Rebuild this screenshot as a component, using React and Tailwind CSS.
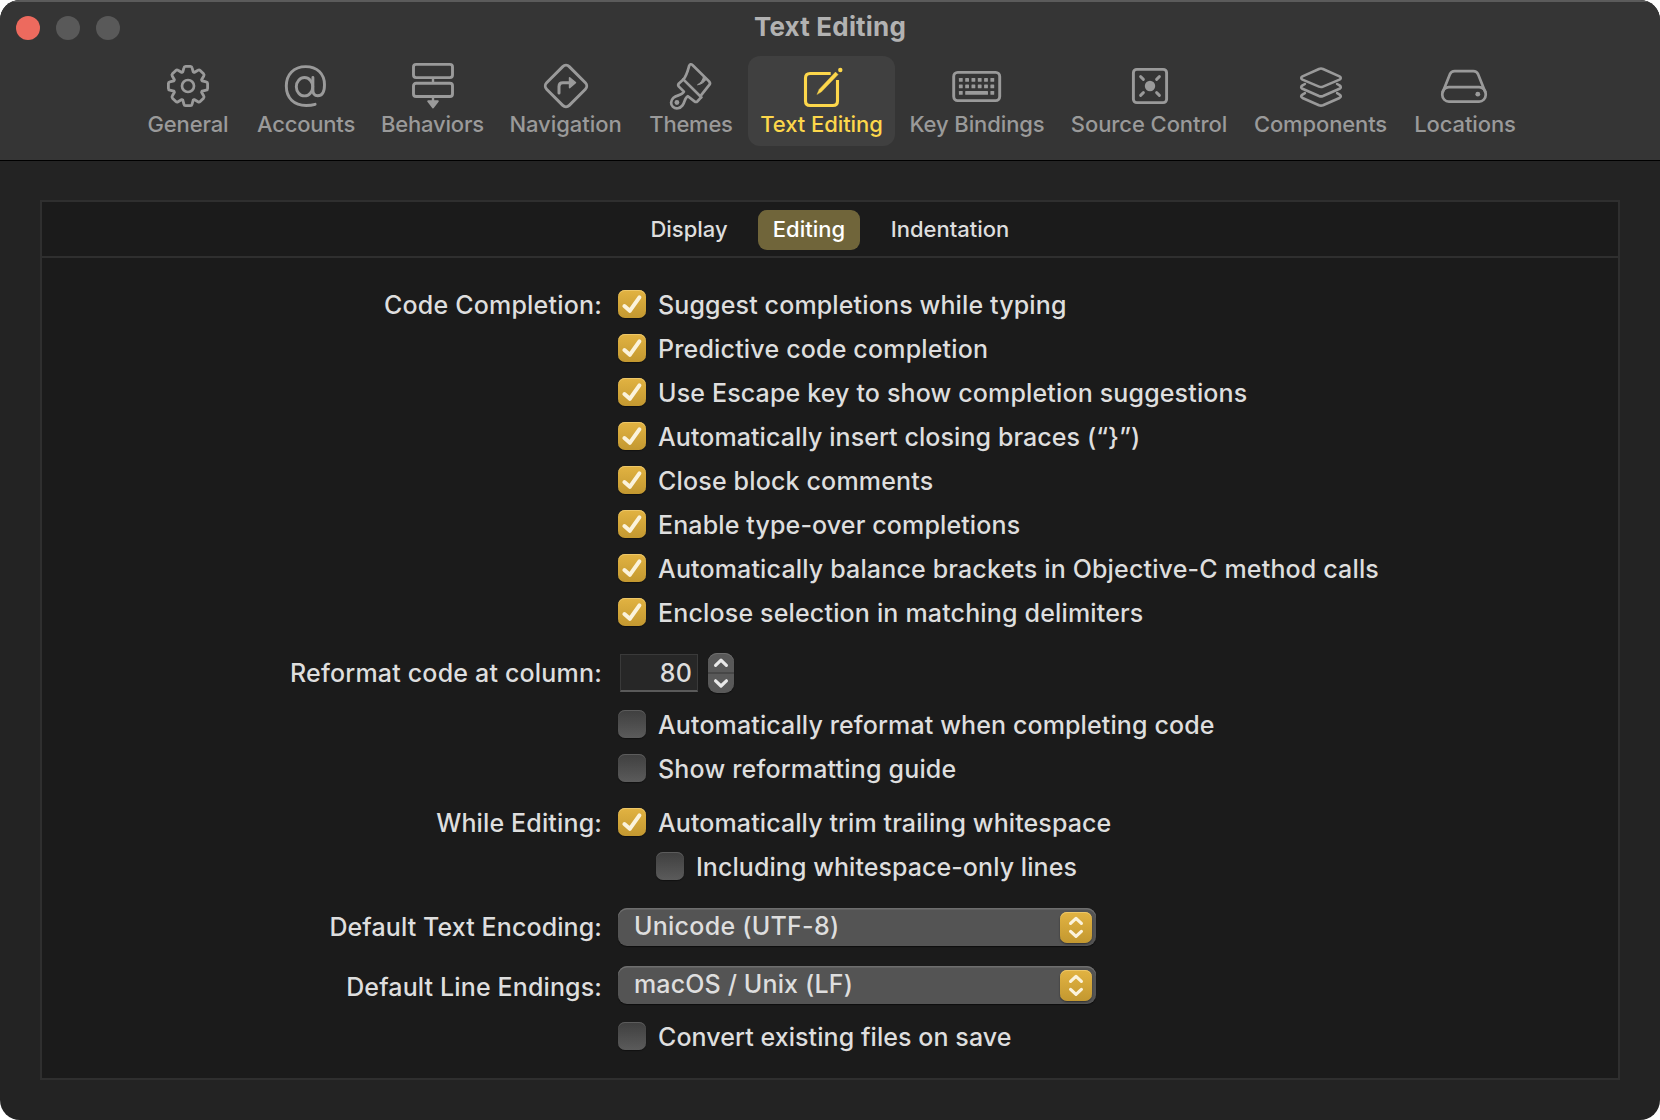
const teeth = Array.from({ length: 8 }, (_, i) => {
  const a = (i * Math.PI) / 4;
  const at = (x, y) =>
    `${(x * Math.cos(a) - y * Math.sin(a)).toFixed(2)} ${(x * Math.sin(a) + y * Math.cos(a)).toFixed(2)}`;
  return `${i ? "L" : "M"}${at(-5.2, -14)} L${at(-4.1, -18.2)} Q${at(-3.8, -19.6)} ${at(-2.4, -19.6)} L${at(2.4, -19.6)} Q${at(3.8, -19.6)} ${at(4.1, -18.2)} L${at(5.2, -14)}`;
}).join(" ");

function Icon({ children }) {
  return (
    <svg
      className="block h-[52px] w-[60px] shrink-0"
      viewBox="-30 -26 60 52"
      fill="none"
      stroke="currentColor"
      strokeWidth="2.9"
      strokeLinecap="round"
      strokeLinejoin="round"
    >
      {children}
    </svg>
  );
}

const GeneralIcon = () => (
  <Icon>
    <path d={teeth + " Z"} strokeWidth="2.8" />
    <circle r="6" strokeWidth="2.7" />
  </Icon>
);

const AccountsIcon = () => (
  <Icon>
    <g transform="translate(-0.5 0)">
      <ellipse cx="-1" cy="0.7" rx="8.2" ry="9.2" />
      <path d="M7.4 -8.5 V4 C7.4 8 9.4 9.8 12.2 9.8 C16.6 9.8 19 5.5 19 -1.2 C19 -12.2 11.5 -19.4 0.2 -19.4 C-11.7 -19.4 -19.2 -11.5 -19.2 0.1 C-19.2 12 -11.6 19.5 0.6 19.5 C4.2 19.5 7 19.1 9.6 18.3" />
    </g>
  </Icon>
);

const BehaviorsIcon = () => (
  <Icon>
    <rect x="-19.5" y="-21.6" width="39" height="13.2" rx="2.6" />
    <rect x="-19.5" y="-2.7" width="39" height="13.2" rx="2.6" />
    <path d="M0 -8 V-3 M0 11 V15" strokeWidth="2.4" strokeLinecap="butt" />
    <path d="M-4.8 15.2 H4.8 L0 21.4 Z" fill="currentColor" strokeWidth="2" />
  </Icon>
);

const NavigationIcon = () => (
  <Icon>
    <rect x="-16" y="-16" width="32" height="32" rx="4.6" transform="rotate(45)" />
    <path d="M-7 7 V0.6 Q-7 -3.3 -3.1 -3.3 H3.6" strokeWidth="3" />
    <path d="M3.6 -8.2 L9.4 -3.3 L3.6 1.6 Z" fill="currentColor" strokeWidth="1.6" />
  </Icon>
);

const ThemesIcon = () => (
  <Icon>
    <g transform="translate(-0.5 0)">
      <path d="M-7 -6.7 C-3.5 -11 -2.6 -16 -1.4 -20 Q-0.2 -23 2.2 -20.8 L18.6 -4.6 Q20.4 -2.6 18.6 -0.8 L10.7 9.2" strokeWidth="2.7" />
      <path d="M-7.2 -6.6 L10.8 11.2" strokeWidth="2.7" />
      <path
        d="M-7.2 -6.6 L-11.6 -2.6 Q-13 -1 -11.6 0.6 L-6.6 5.6 C-8.6 9.6 -13.6 8.8 -17 11.8 C-20.2 14.8 -20 18.6 -17.6 20.8 C-14.6 23.4 -10.4 22.6 -8 19.4 C-5.4 16 -6 11.6 -2.6 10.2 L4 15.4 Q5.6 16.6 7 15.2 L10.6 11.4"
        strokeWidth="2.7"
      />
      <path d="M13 -9.5 L15.5 -6.5 C13.5 -3.5 10.5 -1.6 7 -1.2 C10.4 -3 12.4 -6 13 -9.5 Z" fill="currentColor" strokeWidth="1" />
      <circle cx="-13.6" cy="16.5" r="2.4" fill="currentColor" stroke="none" />
    </g>
  </Icon>
);

const TextEditingIcon = () => (
  <Icon>
    <g transform="translate(-0.5 0)">
      <path
        d="M9.2 -12.5 H-11.4 Q-16 -12.5 -16 -7.9 V14.9 Q-16 19.5 -11.4 19.5 H11.4 Q16 19.5 16 14.9 V-6"
        strokeWidth="3.1"
        strokeLinecap="butt"
      />
      <path d="M-4.4 8.2 L-2.2 3.2 L14 -14 L16.6 -11.4 L0 5.8 Z" fill="currentColor" strokeWidth="0.4" />
      <circle cx="18.8" cy="-16" r="2.2" fill="currentColor" stroke="none" />
    </g>
  </Icon>
);

const KeyBindingsIcon = () => (
  <Icon>
    <g transform="translate(-0.5 0)">
      <rect x="-22.8" y="-13.6" width="46" height="28.2" rx="4" />
      {[-8, -1.5].map((y) =>
        [-17.6, -11.3, -5, 1.3, 7.6, 13.9].map((x) => (
          <rect key={`${x}${y}`} x={x} y={y} width="3.8" height="3.8" rx="0.6" fill="currentColor" stroke="none" />
        )),
      )}
      <rect x="-17.6" y="5" width="3.8" height="3.8" rx="0.6" fill="currentColor" stroke="none" />
      <rect x="-11.3" y="5" width="22.8" height="3.8" rx="0.6" fill="currentColor" stroke="none" />
      <rect x="13.9" y="5" width="3.8" height="3.8" rx="0.6" fill="currentColor" stroke="none" />
    </g>
  </Icon>
);

const SourceControlIcon = () => (
  <Icon>
    <rect x="-15.6" y="-16.6" width="33.2" height="33.2" rx="3.4" />
    <circle cx="1" cy="0" r="5.2" fill="currentColor" stroke="none" />
    <path d="M-8.4 -9.4 L-5.6 -6.6 M10.4 -9.4 L7.6 -6.6 M-8.4 9.4 L-5.6 6.6 M10.4 9.4 L7.6 6.6" />
  </Icon>
);

const ComponentsIcon = () => (
  <Icon>
    <g strokeWidth="2.6" transform="translate(-0.5 0)">
      <path d="M-1.5 -17 Q0.5 -17.9 2.5 -17 L19 -9.6 Q21.6 -8 19 -6.4 L2.5 0.6 Q0.5 1.4 -1.5 0.6 L-18 -6.4 Q-20.6 -8 -18 -9.6 Z" />
      <path d="M-15.6 -2 L-18 -0.6 Q-20.6 1.2 -18 2.8 L-1.5 10 Q0.5 10.8 2.5 10 L19 2.8 Q21.6 1.2 19 -0.6 L16.6 -2" />
      <path d="M-15.6 7.2 L-18 8.6 Q-20.6 10.4 -18 12 L-1.5 19.2 Q0.5 20 2.5 19.2 L19 12 Q21.6 10.4 19 8.6 L16.6 7.2" />
    </g>
  </Icon>
);

const LocationsIcon = () => (
  <Icon>
    <path
      d="M-22.2 6 L-15.2 -11.6 Q-13.6 -14.8 -10.4 -14.8 H8.4 Q11.6 -14.8 13.2 -11.6 L20.2 6"
      strokeWidth="2.7"
    />
    <rect x="-22.7" y="1.2" width="43.4" height="14.4" rx="6.6" strokeWidth="2.7" />
    <circle cx="12.8" cy="8.2" r="2.4" fill="currentColor" stroke="none" />
  </Icon>
);

const toolbar = [
  ["General", GeneralIcon, "w-[108px] tracking-[-0.15px]"],
  ["Accounts", AccountsIcon, "w-[124px] tracking-[-0.2px]"],
  ["Behaviors", BehaviorsIcon, "w-[125px] tracking-[-0.2px]"],
  ["Navigation", NavigationIcon, "w-[137px] tracking-[-0.05px]"],
  ["Themes", ThemesIcon, "w-[110px] tracking-[-0.25px]"],
  ["Text Editing", TextEditingIcon, "w-[147px] bg-[#404040] tracking-[-0.08px] text-[#fdd74b]"],
  ["Key Bindings", KeyBindingsIcon, "w-[160px] tracking-[-0.1px]"],
  ["Source Control", SourceControlIcon, "w-[180px] tracking-[-0.08px]"],
  ["Components", ComponentsIcon, "w-[159px] tracking-[-0.12px]"],
  ["Locations", LocationsIcon, "w-[126px] tracking-[-0.1px]"],
];

function Checkbox({ checked }) {
  return checked ? (
    <span className="h-7 w-7 shrink-0 rounded-[7px] bg-gradient-to-b from-[#e2b342] to-[#c39830] shadow-[inset_0_1px_0_#edc768,0_1px_1px_rgba(0,0,0,0.4)]">
      <svg viewBox="0 0 28 28" className="h-7 w-7" fill="none" stroke="#fbf3dc" strokeWidth="4" strokeLinecap="round" strokeLinejoin="round">
        <path d="M6.4 16 L11.8 20.8 L21.4 7.4" />
      </svg>
    </span>
  ) : (
    <span className="h-7 w-7 shrink-0 rounded-[7px] bg-gradient-to-b from-[#3f3f3f] to-[#5b5b5b] shadow-[inset_0_1px_0_#5c5c5c,0_1px_1px_rgba(0,0,0,0.4)]" />
  );
}

function Row({ label = "", labelClass = "leading-[30px] tracking-[0.2px]", className = "", children }) {
  return (
    <div className={`flex items-start gap-4 ${className}`}>
      <div className={`w-[560px] shrink-0 text-right ${labelClass}`}>{label}</div>
      {children}
    </div>
  );
}

function Option({ text, tracking, checked = false, className = "" }) {
  return (
    <label className={`flex h-7 items-start gap-3 whitespace-nowrap ${className}`}>
      <Checkbox checked={checked} />
      <span className={`leading-[30px] ${tracking}`}>{text}</span>
    </label>
  );
}

function Popup({ text, tracking }) {
  return (
    <div className="flex h-[38px] w-[478px] justify-between rounded-[9px] bg-[#545454] pr-1 pl-4 shadow-[inset_0_1.5px_0_#6e6e6e,0_1px_1px_rgba(0,0,0,0.5)]">
      <span className={`leading-9 ${tracking}`}>{text}</span>
      <span className="mt-[3.5px] flex h-[31px] w-8 rounded-[7px] bg-gradient-to-b from-[#e2b342] to-[#c39830] shadow-[inset_0_1px_0_#edc768,0_1px_2px_rgba(0,0,0,0.45)]">
        <svg viewBox="0 0 32 31" className="h-[31px] w-8" fill="none" stroke="#fbf3dc" strokeWidth="3.2" strokeLinecap="round" strokeLinejoin="round">
          <path d="M10.6 11.4 L16 6.4 L21.4 11.4 M10.6 19.4 L16 24.4 L21.4 19.4" />
        </svg>
      </span>
    </div>
  );
}

const completion = [
  ["Suggest completions while typing", "tracking-[0.14px]"],
  ["Predictive code completion", "tracking-[0.18px]"],
  ["Use Escape key to show completion suggestions", "tracking-[0.15px]"],
  ["Automatically insert closing braces (“}”)", "tracking-[0.08px]"],
  ["Close block comments", "tracking-[0.17px]"],
  ["Enable type-over completions", "tracking-[0.13px]"],
  ["Automatically balance brackets in Objective-C method calls", "tracking-[0.155px]"],
  ["Enclose selection in matching delimiters", "tracking-[0.165px]"],
];

export default function App() {
  return (
    <div className="h-[1120px] w-[1660px] bg-white font-['Inter',sans-serif] font-[450]">
      <div className="flex h-full flex-col overflow-hidden rounded-[20px] bg-[#232323]">
        <header className="h-[161px] shrink-0 border-b border-black bg-[#353535] shadow-[inset_0_2px_0_#5b5b5b]">
          <div className="grid h-14 grid-cols-[1fr_auto_1fr] items-start pl-4">
            <div className="flex gap-4 pt-4">
              <span className="h-6 w-6 rounded-full bg-[#ed6a5e]" />
              <span className="h-6 w-6 rounded-full bg-[#595959]" />
              <span className="h-6 w-6 rounded-full bg-[#595959]" />
            </div>
            <h1 className="-ml-4 pt-[11px] text-[26px] leading-8 font-bold tracking-[0.2px] text-[#b2b2b2]">Text Editing</h1>
          </div>
          <nav className="flex gap-[2px] pl-[134px] text-[22px] text-[#9a9a9a]">
            {toolbar.map(([name, Glyph, cls]) => (
              <div key={name} className={`flex h-[90px] shrink-0 flex-col items-center rounded-[12px] pt-1 whitespace-nowrap ${cls}`}>
                <Glyph />
                <span className="-mt-[2px] leading-7">{name}</span>
              </div>
            ))}
          </nav>
        </header>

        <main className="mx-10 mt-[39px] h-[880px] border-2 border-[#2f2f2f] bg-[#1b1b1b] text-[25px] text-[#dedede]">
          <div className="flex h-14 justify-center gap-4 border-b-2 border-[#2f2f2f] pt-2 text-[22px] leading-[39px]">
            <div className="w-[106px] text-center">Display</div>
            <div className="h-10 w-[102px] rounded-[9px] bg-[#70653a] text-center font-medium text-white">Editing</div>
            <div className="w-[148px] text-center">Indentation</div>
          </div>

          <div className="pt-8">
            <Row label="Code Completion:">
              <div className="flex flex-col gap-4">
                {completion.map(([text, tracking]) => (
                  <Option key={text} text={text} tracking={tracking} checked />
                ))}
              </div>
            </Row>

            <Row label="Reformat code at column:" labelClass="leading-10 tracking-[0.19px]" className="mt-[27px]">
              <div className="flex h-10 gap-[10px] pl-[2px]">
                <div className="mt-px h-[38px] w-[78px] border border-b-2 border-[#3a3a3a] border-b-[#5a5a5a] bg-[#272727] pr-[5px] text-right leading-9 tracking-[0.2px]">
                  80
                </div>
                <div className="h-10 w-[26px] rounded-[9px] bg-[#595959] shadow-[inset_0_1px_0_#6e6e6e,0_1px_1px_rgba(0,0,0,0.4)]">
                  <svg viewBox="0 0 26 40" className="h-10 w-[26px]" fill="none" stroke="#e8e8e8" strokeWidth="3.2" strokeLinecap="round" strokeLinejoin="round">
                    <path d="M0 20 H26" stroke="#474747" strokeWidth="2" strokeLinecap="butt" />
                    <path d="M7.6 12.4 L13 7.2 L18.4 12.4 M7.6 27.8 L13 33 L18.4 27.8" />
                  </svg>
                </div>
              </div>
            </Row>
            <Row className="mt-[17px]">
              <div className="flex flex-col gap-4">
                <Option text="Automatically reformat when completing code" tracking="tracking-[0.12px]" />
                <Option text="Show reformatting guide" tracking="tracking-[0.18px]" />
              </div>
            </Row>

            <Row label="While Editing:" labelClass="leading-[30px] tracking-[0.14px]" className="mt-[26px]">
              <div className="flex flex-col gap-4">
                <Option text="Automatically trim trailing whitespace" tracking="tracking-[0.1px]" checked />
                <Option text="Including whitespace-only lines" tracking="tracking-[0.06px]" className="pl-[38px]" />
              </div>
            </Row>

            <Row label="Default Text Encoding:" labelClass="leading-[38px] tracking-[0.1px]" className="mt-7 h-[38px]">
              <Popup text="Unicode (UTF-8)" tracking="tracking-[0.26px]" />
            </Row>
            <Row label="Default Line Endings:" labelClass="leading-[42px] tracking-[0.13px]" className="mt-5 h-[38px]">
              <Popup text="macOS / Unix (LF)" tracking="tracking-[0.14px]" />
            </Row>
            <Row className="mt-[18px]">
              <Option text="Convert existing files on save" tracking="tracking-[0.07px]" />
            </Row>
          </div>
        </main>
      </div>
    </div>
  );
}
